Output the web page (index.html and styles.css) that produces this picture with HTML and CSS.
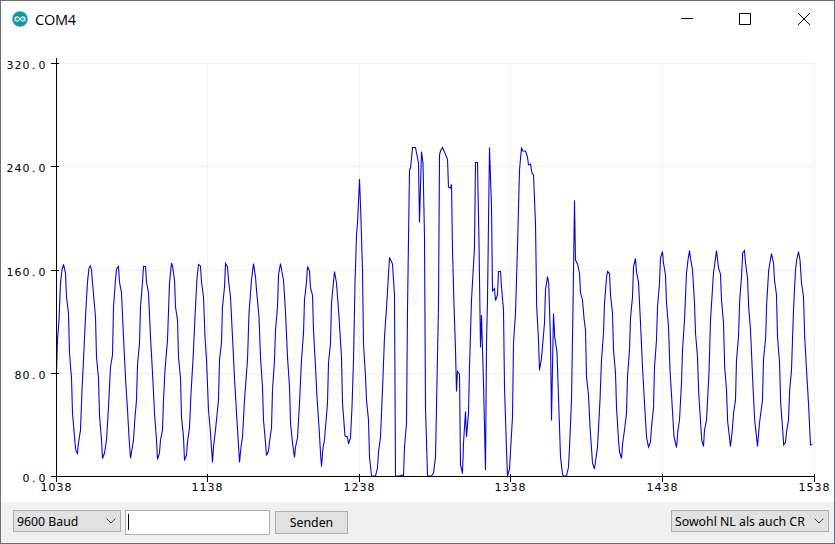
FILE: index.html
```html
<!DOCTYPE html>
<html lang="de">
<head>
    <meta charset="UTF-8">
    <meta name="viewport" content="width=device-width, initial-scale=1.0">
    <title>COM4</title>
    <link rel="stylesheet" href="styles.css">
</head>
<body>
    <div class="window">
        <div class="title-bar">
            <svg class="app-icon" width="16" height="16" viewBox="0 0 16 16">
                <circle cx="8" cy="8" r="7.7" fill="#15979c"/>
                <path d="M8 8C7 6.5 6.3 5.8 5.2 5.8a2.2 2.2 0 0 0 0 4.4C6.3 10.2 7 9.500 8 8s1.700-2.200 2.800-2.200a2.200 2.200 0 0 1 0 4.400C9.700 10.200 9 9.500 8 8z" fill="none" stroke="#d9f3f3" stroke-width="1.2"/>
                <path d="M4.300 8h1.800M9.900 8h1.800M10.800 7.100v1.800" stroke="#a5dcdd" stroke-width=".7"/>
            </svg>
            <div class="title">COM4</div>
            <svg class="window-buttons" width="132" height="14" viewBox="0 0 132 14">
                <path d="M1 6.500h12M59.500 1.500h11v11h-11z"/>
                <path d="M118 1l12 12M130 1L118 13"/>
            </svg>
        </div>

        <svg class="plot" width="833" height="464" viewBox="1 38 833 464">
            <path class="grid" d="M57 63.500H814.500V476M57 166.500H814M57 270.500H814M57 373.500H814M207.500 64V476M359.500 64V476M510.500 64V476M662.500 64V476"/>
            <polyline class="graph" points="
                56.500,373 57.500,340 59,320 60.500,283 62,270 63.500,264.500 65.500,273 66.500,297 68.500,313 69.500,353 71.500,378 72.500,413 75,443 76,451 77.500,453.500
                78.200,445 80.500,430 82,390 83.500,360 85.500,317 87.500,282 89,268 90.500,266 91.500,270 92.500,283 95.500,317 96.500,357 98.500,378 99.500,415 101.500,440 102.500,458.500
                104.500,453 106.500,440 108.500,407 110.500,367 112.500,355 113.500,307 115.500,280 116.500,269 118.500,266.500 119.500,282 121.500,293 123.500,337 125.500,378 127.500,410 129,437 130.500,458.500
                133.500,440 135,417 136.500,400 137.500,365 139.500,343 140.500,307 142.500,282 143.500,266.500 145.500,266.500 146.500,282 148.500,293 150.500,337 152.500,373 154.500,413 156.500,440 157.500,459.500
                159.500,453 160.500,440 162.500,430 163.500,400 165,370 167.500,340 169.500,283 171.500,263 172.500,266 174.500,280 175.500,307 177.500,320 178.500,357 180.500,378 181.500,417 183.500,437 184.500,460.500
                186.500,455 187.500,442 189.500,428 191,393 193,360 195,317 197,278 198.500,264.500 200.500,266 201.500,282 203.500,297 205,337 206.500,360 208.500,410 210.500,433 212.500,462.500
                213.500,447 215.500,430 218.500,400 219.500,360 221.500,343 222.500,307 224.500,287 225.500,263.500 227.500,267 228.500,280 230.500,297 232.500,337 234.500,378 236.500,413 238,437 239.500,462.500
                241,447 242.500,437 244.500,400 247.500,360 249,313 251.500,280 253.500,263.500 255.500,277 256.500,290 259,317 260.500,357 262.500,387 263.500,420 265.500,443 266.500,455.500
                268.500,451 269.500,442 271.500,428 272.500,390 274.500,360 275.500,330 277.500,307 278.500,275 280.500,263.500 282,272 283.500,280 285.500,312 287.500,357 289.500,387 290.500,423 292.500,443 294.500,457.500
                295.500,447 297.500,438 299.500,403 301.500,360 303.500,333 304.500,300 306.500,282 307.500,266.500 309.500,271 310.500,288 312.500,295 313.500,330 315.500,367 317,397 319,427 320.500,453 321.500,466.500
                323,448 324.500,440 327.500,403 328.500,363 330.500,343 331.500,303 333.500,282 334.500,271.500 336.500,283 339,317 341.500,357 342.500,403 345,436 347.500,437 348.500,444
                350.500,438 352,407 353.500,360 355,283 356.500,236 357.700,220 359.500,179 360.700,210 362.500,270 363.500,343 365.500,377 366.500,400 368.500,420 369.500,457 371.500,476
                375.500,476 377.500,468 378.500,452 380.500,437 382.500,390 384.500,337 386.500,308 389.500,257.500 392.500,264 394.500,295 395.500,476
                400.500,476 401.500,475 403.500,476 404.500,447 406.500,423 407.500,310 408.500,240 409.500,170 410.500,168 412.500,147.500 415.500,147.500 416.500,153 418.500,163 419.500,222.500 421.500,151.500 423,163 424.500,237 425.500,407 427.500,476
                431.500,476 433.500,473 435.500,457 436.500,407 438.500,305 439.500,155 440.500,151 442.500,147.500 447.500,159 448.500,187 450.500,188 451.500,184.500 452.500,250 454,305 455.500,350 456.500,391.500 457.500,371.500 459.500,374 460.500,465 462.500,473.500
                463.500,443 465.500,411.500 466.500,437 468.500,413 469.500,367 471.500,300 474.500,247 475.500,162.500 477.500,162.500 479,243 480.500,347.500 481.500,315 483.500,383 485.500,470
                486.500,343 487.500,300 489.500,147.500 491.500,207 492.500,291 494.500,288.500 495.500,300.500 497.500,295 498.500,271.500 500.500,271.500 501.500,287 503.500,310 504.500,387 506.500,450 507.500,476
                509.500,469 512.500,417 513.500,343 515.500,313 517.500,247 519.500,170 521.500,147.500 522.500,151 525.500,151 527.500,157 528.500,165 530.500,164 532,173 533.500,175 535.500,223 536.700,307 538.500,340 539.500,370.500
                541.500,358 544.500,323 545.500,290 547.500,276.500 548.700,283 550.500,340 551.500,420.500 553.500,313.500 554.700,337 557,352 558.500,397 560.500,457 562.500,474 563.500,476
                566.500,476 568.500,467 569.700,443 571.500,400 573,307 574.500,200.500 575.500,260 577.500,264 579.500,273 580.500,293 582.500,300 584,318 585.500,330 586.500,377 588.500,395 590,427 592.500,463 594.500,469
                597.500,447 600,400 601.500,360 603.500,333 604.500,303 606.500,278 607.500,271.500 609.500,273.500 610.500,295 612.500,313 613.500,350 615.500,373 616.500,407 618.500,440 619.500,452 621.500,458.500
                622.700,443 624.500,430 626.500,413 627.500,377 629.500,350 630.500,318 632.500,297 633.500,267 635.500,258.500 636.500,272 638.500,282 640.500,323 642.500,367 644.500,403 646.500,437 648.500,447
                650.500,442 651.500,427 653.500,408 654.500,367 656.500,340 657.500,307 659.500,283 660.500,258 662.500,251.500 663.500,263 665.500,275 666.500,303 668.500,327 670,370 672,403 674,437 676.500,447.500
                678,430 679.500,420 681.500,383 682.500,350 684.500,320 686.500,273 688,260 689.500,250.500 690.500,258 692.500,270 694.500,303 695.500,333 697.500,357 698.700,393 700,413 701.700,440 703.500,446.500
                704.500,430 706.500,420 709,373 710.500,320 713.500,273 716.500,250.500 718.500,268 720.500,274 721.500,300 723.500,323 724.700,367 726.500,390 727.700,422 730.500,446.500
                732,433 733.700,412 735.500,400 736.500,360 738.500,337 739.700,300 741.500,277 742.700,253 744.500,250.500 745.500,263 747.500,278 748.700,307 750.500,330 753,387 754.700,420 757.500,446.500
                759.500,423 762.500,400 763.500,360 765.700,337 766.700,303 768.700,270 771.500,253.500 773.500,263 774.500,280 776.500,295 777.500,337 779.500,362 780.700,403 782.700,430 783.700,445
                785.500,442.500 786.500,432 788.500,420 789.700,390 791.500,370 793.500,310 795.500,270 796.700,260 798.500,251.500 800,260 801.500,283 803.500,297 804.700,337 806.700,373 808.700,407 810.500,445 812.500,444"/>
            <path class="axis" d="M56.500 58V482M51 63.500h8M51 166.500h8M51 270.500h8M51 373.500h8M51 476.500H815M207.500 474v8M359.500 474v8M510.500 474v8M662.500 474v8M814.500 474v8"/>
            <g class="labels">
                <text x="6.500 14.500 22.500 32 38.500" y="69">320.0</text>
                <text x="6.500 14.500 22.500 32 38.500" y="172">240.0</text>
                <text x="6.500 14.500 22.500 32 38.500" y="276">160.0</text>
                <text x="14.500 22.500 32 38.500" y="379">80.0</text>
                <text x="22.500 32 38.500" y="482">0.0</text>
                <text x="40.500 48.500 56.500 64.500" y="491">1038</text>
                <text x="191.500 199.500 207.500 215.500" y="491">1138</text>
                <text x="343.500 351.500 359.500 367.500" y="491">1238</text>
                <text x="494.500 502.500 510.500 518.500" y="491">1338</text>
                <text x="646.500 654.500 662.500 670.500" y="491">1438</text>
                <text x="798.500 806.500 814.500 822.500" y="491">1538</text>
            </g>
        </svg>

        <div class="tool-bar">
            <div class="select baud">
                <span>9600 Baud</span>
                <svg class="arrow" width="10" height="6" viewBox="0 0 10 6"><path d="M.5.5L5 5 9.500.5"/></svg>
            </div>
            <div class="message"><span class="caret"></span></div>
            <button class="send">Senden</button>
            <div class="select line-ending">
                <span>Sowohl NL als auch CR</span>
                <svg class="arrow" width="10" height="6" viewBox="0 0 10 6"><path d="M.5.5L5 5 9.500.5"/></svg>
            </div>
        </div>
    </div>
</body>
</html>
```
FILE: styles.css
```css
body {
    margin: 0;
    background-color: #fff;
    font-family: "Noto Sans", sans-serif;
    font-size: 12.3px;
    color: #000;
    overflow: hidden;
}
.window {
    width: 835px;
    height: 544px;
    box-sizing: border-box;
    border: 1px solid #6e6e70;
    display: flex;
    flex-direction: column;
}
.title-bar {
    height: 37px;
    display: flex;
    align-items: center;
    padding: 0 22px 0 11px;
    box-sizing: border-box;
}
.app-icon {
    margin-right: 7px;
    margin-bottom: 1px;
}
.title {
    flex: 1;
    font-family: "Open Sans", sans-serif;
    font-size: 14.5px;
    letter-spacing: -0.2px;
}
.window-buttons {
    margin-bottom: 2px;
    fill: none;
    stroke: #000;
    stroke-width: 1;
}
.plot {
    display: block;
    flex: none;
}
.grid {
    fill: none;
    stroke: #f0f0f0;
}
.axis {
    fill: none;
    stroke: #000;
}
.graph {
    fill: none;
    stroke: #0808cc;
    stroke-width: 1.1;
}
.labels {
    font-family: "DejaVu Sans", sans-serif;
    font-size: 11px;
}
.tool-bar {
    flex: 1;
    display: flex;
    align-items: flex-start;
    padding: 8px 5px 0 12px;
    background-color: #f0f0f0;
}
.select {
    height: 22px;
    box-sizing: border-box;
    border: 1px solid #adadb2;
    background-color: #e1e1e1;
    display: flex;
    align-items: center;
    justify-content: space-between;
    padding: 0 4px 0 3px;
    white-space: nowrap;
}
.baud {
    width: 108px;
}
.line-ending {
    width: 158px;
    margin-left: auto;
}
.arrow {
    fill: none;
    stroke: #444;
}
.message {
    width: 145px;
    height: 25px;
    box-sizing: border-box;
    margin: 0 5px 0 4px;
    padding: 3px 2px;
    border: 1px solid #adadb2;
    background-color: #fff;
}
.caret {
    display: block;
    width: 1px;
    height: 16px;
    background-color: #000;
}
.send {
    width: 73px;
    height: 23px;
    margin: 1px 0 0;
    padding: 0;
    border: 1px solid #adadb2;
    background-color: #e1e1e1;
    font: inherit;
    line-height: 21px;
    color: inherit;
}
```
